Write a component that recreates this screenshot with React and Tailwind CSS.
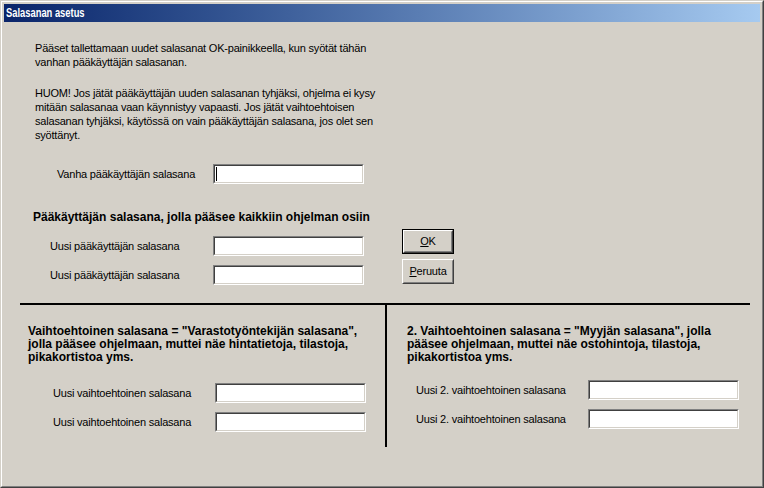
const FONT = "font-['Liberation_Sans',Arial,sans-serif]"

function Field({ caret }) {
  return (
    <div className="w-[151px] h-[20px] border border-t-[#808080] border-l-[#808080] border-r-white border-b-white">
      <div className="h-full border border-t-[#404040] border-l-[#404040] border-r-[#d4d0c8] border-b-[#d4d0c8] bg-white flex items-center">
        {caret && <div className="ml-[1px] w-px h-[14px] bg-black" />}
      </div>
    </div>
  )
}

function WinButton({ isDefault, children }) {
  const inner = (
    <div className="h-full border border-t-white border-l-white border-r-[#404040] border-b-[#404040]">
      <div className="h-full border border-t-[#d4d0c8] border-l-[#d4d0c8] border-r-[#808080] border-b-[#808080] flex items-center justify-center text-[11px] text-black">
        {children}
      </div>
    </div>
  )
  return isDefault
    ? <div className="w-[52px] h-[25px] border border-black">{inner}</div>
    : <div className="w-[52px] h-[25px]">{inner}</div>
}

function Row({ labelW, pl, label, mt = '', caret }) {
  return (
    <div className={`flex items-center h-[20px] ${mt}`}>
      <div className="shrink-0 whitespace-nowrap" style={{ width: labelW, paddingLeft: pl }}>{label}</div>
      <Field caret={caret} />
    </div>
  )
}

export default function App() {
  return (
    <div className={`w-[764px] h-[488px] ${FONT} text-[11px] tracking-[-0.2px] text-black bg-[#d4d0c8]`}>
      {/* window frame */}
      <div className="h-full border border-t-[#d4d0c8] border-l-[#d4d0c8] border-r-[#404040] border-b-[#404040]">
        <div className="h-full border border-t-white border-l-white border-r-[#808080] border-b-[#808080] p-[2px] flex flex-col">

          {/* title bar */}
          <div className="h-[18px] shrink-0 bg-gradient-to-r from-[#0a246a] to-[#a6caf0] flex items-center pl-[2px]">
            <span className="text-white font-bold text-[12px] tracking-[0px] origin-left scale-x-[0.78] whitespace-nowrap">
              Salasanan asetus
            </span>
          </div>

          {/* body */}
          <div className="flex-1 flex flex-col">
            <div className="pl-[31px] pt-[19px] leading-[14px] whitespace-nowrap">
              <p>
                Pääset tallettamaan uudet salasanat OK-painikkeella, kun syötät tähän<br />
                vanhan pääkäyttäjän salasanan.
              </p>
              <p className="mt-[17px]">
                HUOM! Jos jätät pääkäyttäjän uuden salasanan tyhjäksi, ohjelma ei kysy<br />
                mitään salasanaa vaan käynnistyy vapaasti. Jos jätät vaihtoehtoisen<br />
                salasanan tyhjäksi, käytössä on vain pääkäyttäjän salasana, jos olet sen<br />
                syöttänyt.
              </p>
            </div>

            <Row mt="mt-[22px]" labelW={209} pl={53} label="Vanha pääkäyttäjän salasana" caret />

            <div className="mt-[26px] pl-[29px] font-bold text-[12px] leading-[14px] tracking-[0px] whitespace-nowrap">
              Pääkäyttäjän salasana, jolla pääsee kaikkiin ohjelman osiin
            </div>

            <div className="mt-[5px] flex">
              <div className="pt-[7px] flex flex-col gap-[9px]">
                <Row labelW={209} pl={46} label="Uusi pääkäyttäjän salasana" />
                <Row labelW={209} pl={46} label="Uusi pääkäyttäjän salasana" />
              </div>
              <div className="ml-[38px] flex flex-col gap-[5px]">
                <WinButton isDefault><span><u>O</u>K</span></WinButton>
                <WinButton><span><u>P</u>eruuta</span></WinButton>
              </div>
            </div>

            {/* lower sections */}
            <div className="mt-[18px] ml-[16px] w-[730px] border-t-2 border-black flex">
              <div className="w-[365px] shrink-0">
                <div className="pl-[8px] pt-[20px] font-bold text-[12px] leading-[13px] tracking-[0px] whitespace-nowrap">
                  Vaihtoehtoinen salasana = "Varastotyöntekijän salasana",<br />
                  jolla pääsee ohjelmaan, muttei näe hintatietoja, tilastoja,<br />
                  pikakortistoa yms.
                </div>
                <div className="mt-[19px] flex flex-col gap-[9px]">
                  <Row labelW={195} pl={33} label="Uusi vaihtoehtoinen salasana" />
                  <Row labelW={195} pl={33} label="Uusi vaihtoehtoinen salasana" />
                </div>
              </div>
              <div className="flex-1 h-[142px] border-l-2 border-black">
                <div className="pl-[20px] pt-[20px] font-bold text-[12px] leading-[13px] tracking-[0px] whitespace-nowrap">
                  2. Vaihtoehtoinen salasana = "Myyjän salasana", jolla<br />
                  pääsee ohjelmaan, muttei näe ostohintoja, tilastoja,<br />
                  pikakortistoa yms.
                </div>
                <div className="mt-[16px] flex flex-col gap-[9px]">
                  <Row labelW={201} pl={29} label="Uusi 2. vaihtoehtoinen salasana" />
                  <Row labelW={201} pl={29} label="Uusi 2. vaihtoehtoinen salasana" />
                </div>
              </div>
            </div>
          </div>
        </div>
      </div>
    </div>
  )
}
